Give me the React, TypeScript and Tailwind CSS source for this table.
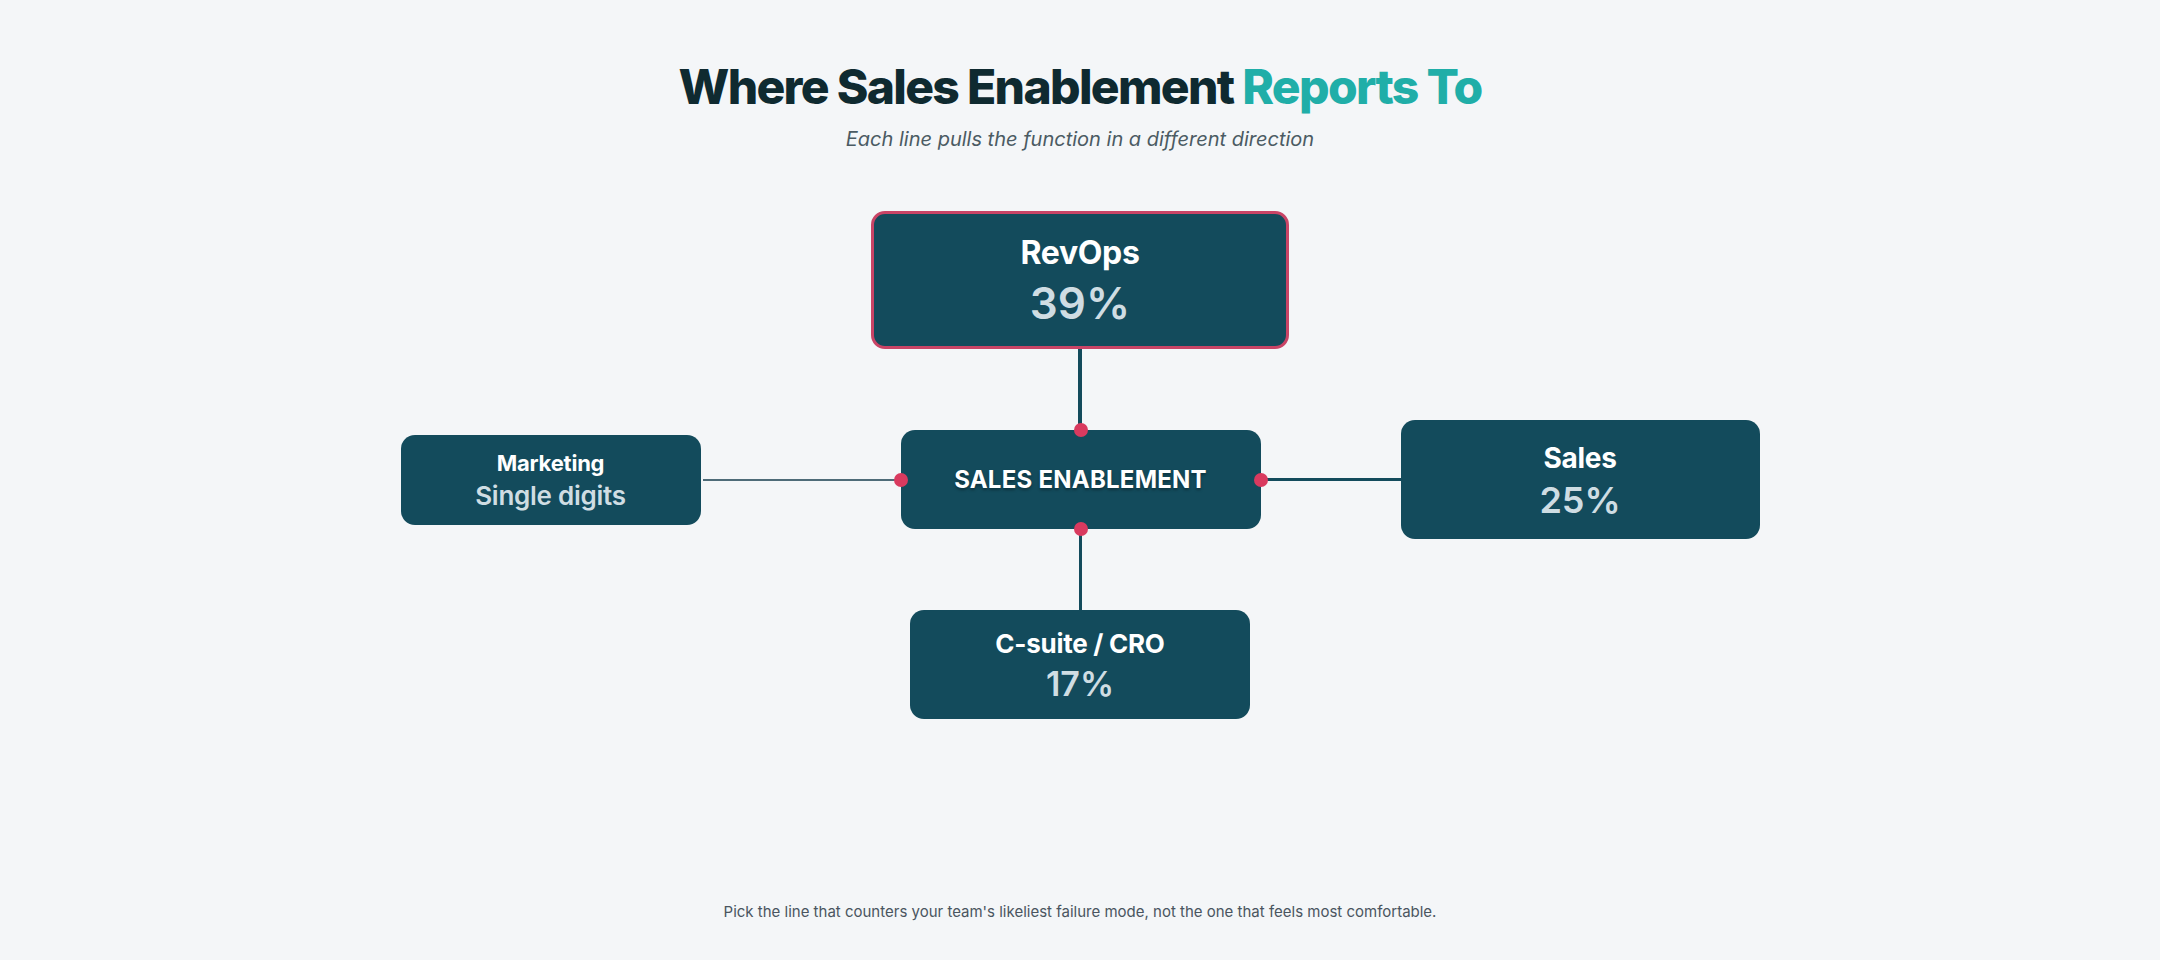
import type { ReactNode } from "react";

function Dot({ className }: { className: string }) {
  return (
    <span
      className={`absolute h-[14px] w-[14px] rounded-full bg-[#d93a5f] ${className}`}
    />
  );
}

function Node({
  className,
  children,
}: {
  className: string;
  children: ReactNode;
}) {
  return (
    <div
      className={`flex flex-col items-center justify-center rounded-[14px] bg-[#134b5c] text-center ${className}`}
    >
      {children}
    </div>
  );
}

function App() {
  return (
    <div className="flex min-h-screen flex-col items-center bg-[#f4f6f8] font-['Inter',sans-serif]">
      <h1 className="mt-[57px] text-[48px] font-extrabold leading-[60px] tracking-[-0.035em] text-[#0f2a30]">
        Where Sales Enablement <span className="text-[#20aea8]">Reports To</span>
      </h1>
      <p className="mt-[8px] text-[20px] italic leading-[28px] text-[#4b5b63]">
        Each line pulls the function in a different direction
      </p>

      {/* diagram */}
      <div className="mt-[58px] flex flex-col items-center">
        <Node className="h-[138px] w-[418px] border-[3px] border-[#c94466]">
          <span className="text-[32px] font-bold leading-[40px] tracking-[-0.01em] text-white">
            RevOps
          </span>
          <span className="mt-[6px] text-[44px] font-semibold leading-[48px] text-[#cfdde3]">
            39%
          </span>
        </Node>

        <div className="h-[81px] w-[4px] bg-[#134b5c]" />

        <div className="flex h-[99px] items-center">
          <Node className="h-[90px] w-[300px]">
            <span className="text-[22px] font-bold leading-[28px] tracking-[-0.01em] text-white">
              Marketing
            </span>
            <span className="mt-[4px] text-[26px] font-semibold leading-[30px] tracking-[-0.01em] text-[#cfdde3]">
              Single digits
            </span>
          </Node>
          <div className="ml-[2px] h-[2px] w-[198px] bg-[#4e6b78]" />
          <div className="relative flex h-[99px] w-[360px] items-center justify-center rounded-[14px] bg-[#134b5c]">
            <span className="text-[24px] font-bold tracking-[0.01em] text-white [text-shadow:0_2px_3px_rgba(0,0,0,0.35)]">
              SALES ENABLEMENT
            </span>
            <Dot className="left-1/2 top-0 -translate-x-1/2 -translate-y-1/2" />
            <Dot className="left-1/2 bottom-0 -translate-x-1/2 translate-y-1/2" />
            <Dot className="left-0 top-1/2 -translate-x-1/2 -translate-y-1/2" />
            <Dot className="right-0 top-1/2 translate-x-1/2 -translate-y-1/2" />
          </div>
          <div className="h-[3px] w-[140px] bg-[#134b5c]" />
          <Node className="h-[119px] w-[359px]">
            <span className="text-[28px] font-bold leading-[36px] tracking-[-0.01em] text-white">
              Sales
            </span>
            <span className="mt-[4px] text-[36px] font-semibold leading-[40px] text-[#cfdde3]">
              25%
            </span>
          </Node>
        </div>

        <div className="h-[81px] w-[3px] bg-[#134b5c]" />

        <Node className="h-[109px] w-[340px]">
          <span className="text-[26px] font-bold leading-[34px] tracking-[-0.01em] text-white">
            C-suite / CRO
          </span>
          <span className="mt-[4px] text-[34px] font-semibold leading-[38px] text-[#cfdde3]">
            17%
          </span>
        </Node>
      </div>

      <p className="mt-[183px] text-[15px] leading-[20px] text-[#4a5560]">
        Pick the line that counters your team's likeliest failure mode, not the one that feels most comfortable.
      </p>
    </div>
  );
}

export default App;
